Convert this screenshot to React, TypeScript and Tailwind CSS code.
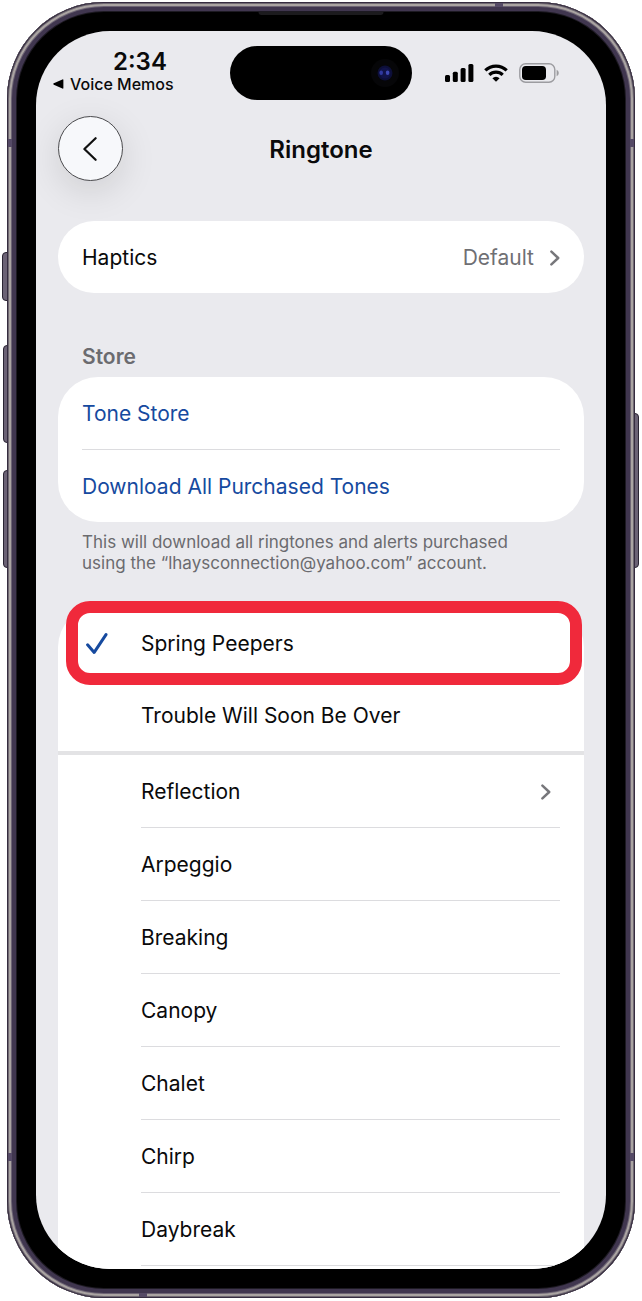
import React, { useState } from 'react';
import clsx from 'clsx';

const purchasedTones = ['Spring Peepers', 'Trouble Will Soon Be Over'];
const builtInTones = ['Reflection', 'Arpeggio', 'Breaking', 'Canopy', 'Chalet', 'Chirp', 'Daybreak'];

function Chevron() {
  return (
    <svg viewBox="0 0 10 16" className="h-4 w-2.5 shrink-0" fill="none" stroke="#77777b" strokeWidth="2.5" strokeLinecap="round" strokeLinejoin="round" aria-hidden="true">
      <path d="M1.4 1.6 8.2 8l-6.8 6.4" />
    </svg>
  );
}

function StatusBar() {
  return (
    <div className="grid grid-cols-[1fr_182px_1fr] pt-[15px]">
      <div className="flex flex-col pl-[17px] pt-1">
        <div className="pl-[60px] text-2xl leading-6 font-semibold">2:34</div>
        <a href="#voice-memos" className="flex items-center gap-[6px] text-base leading-5 font-medium whitespace-nowrap">
          <svg viewBox="0 0 11 10" className="h-2.5 w-[11px]" aria-hidden="true">
            <path d="M.8 4.3 9.4.4Q10.4 0 10.4 1v8q0 1-1 .6L.8 5.7Q-.3 5 .8 4.3Z" />
          </svg>
          Voice Memos
        </a>
      </div>
      <div className="flex h-[54px] items-center justify-end rounded-full bg-black pr-[13px]">
        <svg viewBox="0 0 28 28" className="size-7" aria-hidden="true">
          <circle cx="14" cy="14" r="14" fill="#060608" />
          <circle cx="14" cy="14" r="7.5" fill="#0d0f38" />
          <circle cx="14" cy="14" r="5.5" fill="#11134a" />
          <ellipse cx="10.2" cy="13.8" rx="1.8" ry="2.3" fill="#2f38a0" />
          <ellipse cx="16.6" cy="13.8" rx="1.8" ry="2.3" fill="#3d47b4" />
        </svg>
      </div>
      <div className="flex h-[54px] items-center gap-[10px] pl-[33px]">
        <svg viewBox="0 0 29 18" className="h-[18px] w-[29px]" aria-hidden="true">
          <rect x="0" y="11" width="5" height="7" rx="1.5" />
          <rect x="7.8" y="7.8" width="5" height="10.2" rx="1.5" />
          <rect x="15.6" y="4" width="5" height="14" rx="1.5" />
          <rect x="23.4" y="0" width="5" height="18" rx="1.5" />
        </svg>
        <svg viewBox="0 0 24 18" className="h-[18px] w-6" fill="none" stroke="black" strokeWidth="3.2" aria-hidden="true">
          <path d="M1.3 6.4a15.4 15.4 0 0 1 21.4 0" />
          <path d="M5.3 10.8a9.6 9.6 0 0 1 13.4 0" />
          <path d="M12 17.8 8.4 14.2a5 5 0 0 1 7.2 0Z" fill="black" stroke="none" />
        </svg>
        <svg viewBox="0 0 41 20" className="h-5 w-[41px]" aria-hidden="true">
          <rect x="1.8" y=".8" width="35" height="18.4" rx="5.8" fill="none" stroke="#9c9ca0" strokeWidth="1.4" />
          <rect x="4" y="3" width="24" height="14" rx="3.8" />
          <path d="M38.6 6.8q2.2 1 2.2 3.2t-2.2 3.2Z" fill="#9c9ca0" />
        </svg>
      </div>
    </div>
  );
}

interface ToneRowProps {
  name: string;
  selected: boolean;
  onSelect: () => void;
  divider?: boolean;
  chevron?: boolean;
}

function ToneRow({ name, selected, onSelect, divider, chevron }: ToneRowProps) {
  return (
    <li className="relative">
      <button type="button" aria-pressed={selected} onClick={onSelect} className="flex w-full px-6 text-left">
        <span className="flex h-[72px] w-[59px] shrink-0 items-center pt-0.5 pl-1">
          {selected && (
            <svg viewBox="0 0 22 22" className="size-[22px]" fill="none" stroke="#164a9f" strokeWidth="3" strokeLinecap="round" strokeLinejoin="round" aria-hidden="true">
              <path d="M1.6 11.8 8.2 19.4 20 1.6" />
            </svg>
          )}
        </span>
        <span className={clsx('flex flex-1 items-center justify-between pt-0.5 pr-[9px]', divider ? 'h-[73px] border-b border-[#dcdcdf]' : 'h-[72px]')}>
          {name}
          {chevron && <Chevron />}
        </span>
      </button>
      {selected && (
        <div className="pointer-events-none absolute -top-1.5 right-0.5 -bottom-1.5 left-2 rounded-[24px] border-[12px] border-[#f0293b]" />
      )}
    </li>
  );
}

function SideButton({ className }: { className: string }) {
  return <div className={clsx('absolute w-1.5 border border-[#2a2433] bg-[#6b6275]', className)} />;
}

function Antenna({ className }: { className: string }) {
  return <div className={clsx('absolute bg-[#554a66]', className)} />;
}

export default function App() {
  const [tone, setTone] = useState('Spring Peepers');

  return (
    <main className="bg-white px-[7px] pt-0.5 pb-[3px] font-['Inter',sans-serif] text-[21px] leading-7 text-[#0a0a0b]">
      <div className="relative">
        <SideButton className="top-[250px] -left-[5px] h-[49px] rounded-l-sm" />
        <SideButton className="top-[343px] -left-1 h-[98px] rounded-l-sm" />
        <SideButton className="top-[468px] -left-1 h-[98px] rounded-l-sm" />
        <SideButton className="top-[411px] -right-1 h-[155px] rounded-r-sm" />

        <div className="relative rounded-[97px] bg-black p-[29px] shadow-[inset_0_0_0_1px_#352c3f,inset_0_0_0_2px_#6f6872,inset_0_0_0_4px_#aaa4a2,inset_0_0_0_5px_#6d6474,inset_0_0_0_9px_#40364f,inset_0_0_0_10px_#1d1a22]">
          <Antenna className="top-[137px] left-px h-2 w-1" />
          <Antenna className="top-[137px] right-px h-2 w-1" />
          <Antenna className="bottom-[137px] left-px h-2 w-1" />
          <Antenna className="right-px bottom-[137px] h-2 w-1" />
          <Antenna className="top-px right-[132px] h-1 w-2" />
          <Antenna className="bottom-px left-[132px] h-1 w-2" />
          <div className="absolute top-2.5 left-1/2 h-[3px] w-[125px] -translate-x-1/2 rounded-b-sm bg-[#1c1b1e]" />

          <div className="overflow-hidden rounded-[74px] bg-[#eaeaee]">
            <StatusBar />

            <div className="px-[22px]">
              <header className="mt-4 grid grid-cols-[65px_1fr_65px] items-center">
                <button type="button" aria-label="Back" className="flex size-[65px] items-center justify-center rounded-full border border-[#4a4a4d] bg-[#f7f8fb] shadow-[0_10px_36px_rgba(0,0,0,0.12)]">
                  <svg viewBox="0 0 14 24" className="mr-0.5 h-6 w-3.5" fill="none" stroke="#111" strokeWidth="2.2" strokeLinecap="round" strokeLinejoin="round" aria-hidden="true">
                    <path d="M12.6 1.2 1.4 12l11.2 10.8" />
                  </svg>
                </button>
                <h1 className="pt-0.5 text-center text-2xl font-semibold">Ringtone</h1>
              </header>

              <button type="button" className="mt-10 flex h-[72px] w-full items-center rounded-full bg-white px-6 pt-0.5">
                <span>Haptics</span>
                <span className="mr-4 ml-auto text-[#6f6f73]">Default</span>
                <Chevron />
              </button>

              <section>
                <h2 className="mt-[50px] mb-1.5 px-6 font-semibold text-[#6b6b6f]">Store</h2>
                <div className="rounded-[40px] bg-white px-6 text-[#164a9f]">
                  <a href="#tone-store" className="flex h-[73px] items-center border-b border-[#dcdcdf] pt-0.5">Tone Store</a>
                  <a href="#download" className="flex h-[72px] items-center pt-0.5">Download All Purchased Tones</a>
                </div>
                <p className="mt-2.5 px-6 text-[17px] leading-[21px] text-[#6b6b6f]">
                  This will download all ringtones and alerts purchased
                  <br />
                  using the “lhaysconnection@yahoo.com” account.
                </p>
              </section>

              <section className="mt-[33px] rounded-t-[40px] bg-white pb-[3px]">
                <ul className="border-b-4 border-[#e3e3e5]">
                  {purchasedTones.map((name) => (
                    <ToneRow key={name} name={name} selected={tone === name} onSelect={() => setTone(name)} />
                  ))}
                </ul>
                <ul>
                  {builtInTones.map((name, i) => (
                    <ToneRow key={name} name={name} selected={tone === name} onSelect={() => setTone(name)} divider chevron={i === 0} />
                  ))}
                </ul>
              </section>
            </div>
          </div>
        </div>
      </div>
    </main>
  );
}
